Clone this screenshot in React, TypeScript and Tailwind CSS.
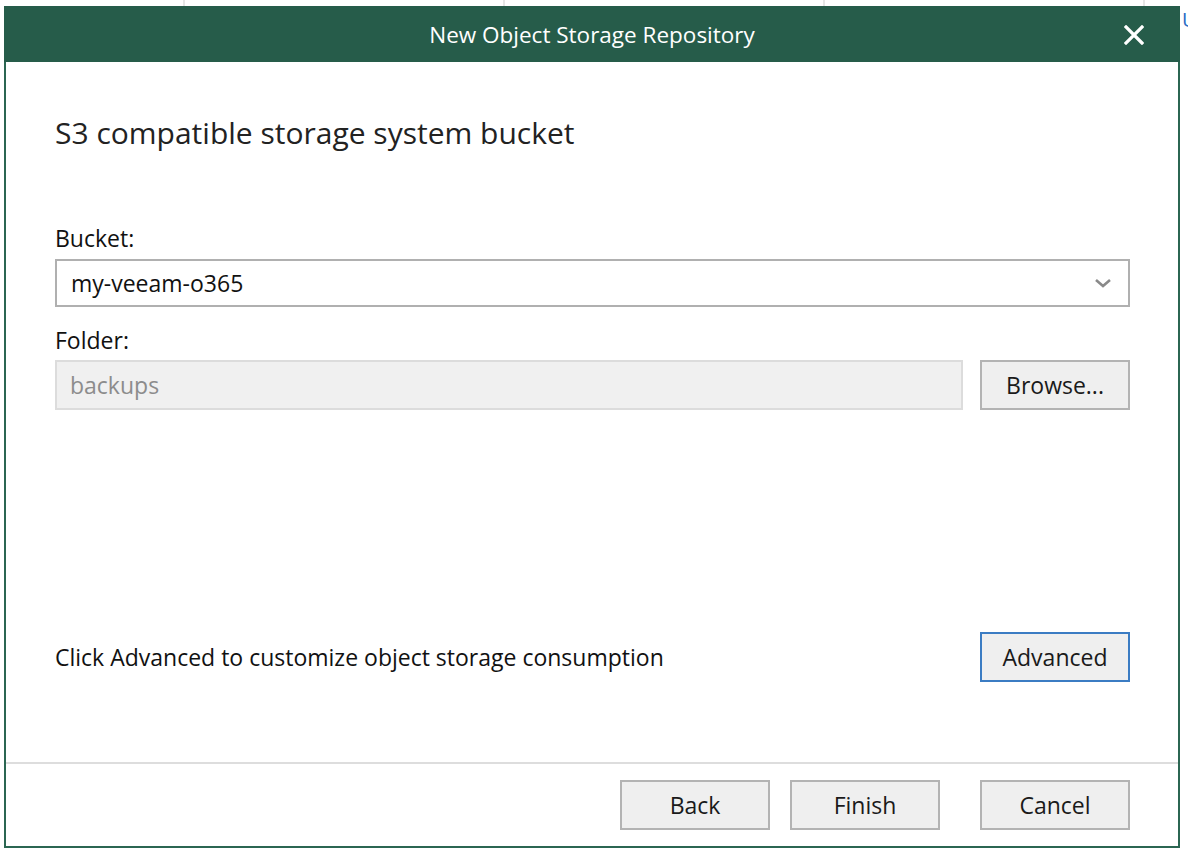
import React from "react";

const font = { fontFamily: '"Open Sans", "Noto Sans", sans-serif' };

function Btn({ label, focused = false }: { label: string; focused?: boolean }) {
  return (
    <div
      className={`w-[150px] h-[50px] shrink-0 flex items-center justify-center bg-[#efefef] border-2 text-[23px] text-[#1a1a1a] ${
        focused ? "border-[#3b7cc3]" : "border-[#b3b3b3]"
      }`}
    >
      {label}
    </div>
  );
}

export default function App() {
  return (
    <div className="w-[1188px] h-[858px] bg-white overflow-hidden" style={font}>
      {/* background strip */}
      <div className="flex h-[6px]">
        <div className="w-[185px] shrink-0 border-r-2 border-[#e6e6e6]" />
        <div className="w-[320px] shrink-0 border-r-2 border-[#e6e6e6]" />
        <div className="w-[320px] shrink-0 border-r-2 border-[#e6e6e6]" />
        <div className="w-[320px] shrink-0 border-r-2 border-[#e6e6e6]" />
      </div>
      <div className="flex">
        <div className="w-[4px] shrink-0" />
        <div className="w-[1176px] h-[842px] shrink-0 border-2 border-[#2b6652] flex flex-col bg-white">
          {/* title bar */}
          <div className="h-[56px] shrink-0 bg-[#265c4a] flex items-center justify-center relative -mt-[2px] -mx-[2px] pt-[2px]">
            <span className="text-white text-[22.5px]">New Object Storage Repository</span>
            <svg
              className="absolute right-[36px] top-[19px]"
              width="20"
              height="20"
              viewBox="0 0 20 20"
            >
              <path d="M2 2 L18 18 M18 2 L2 18" stroke="white" strokeWidth="3.2" strokeLinecap="square" />
            </svg>
          </div>
          {/* body */}
          <div className="flex flex-col pl-[49px] pr-[48px]">
            <div className="mt-[51px] h-[40px] leading-[40px] text-[30px] text-[#222]">
              S3 compatible storage system bucket
            </div>
            <div className="mt-[71px] h-[28px] leading-[28px] text-[23px] text-[#111]">Bucket:</div>
            <div className="mt-[7px] h-[48px] border-2 border-[#b0b0b0] flex items-center pl-[14px] pr-[16px] text-[23px] text-[#111]">
              <span className="flex-1">my-veeam-o365</span>
              <svg width="18" height="12" viewBox="0 0 18 12">
                <path d="M2 3 L9 9 L16 3" stroke="#8a8a8a" strokeWidth="2.6" fill="none" />
              </svg>
            </div>
            <div className="mt-[19px] h-[28px] leading-[28px] text-[23px] text-[#111]">Folder:</div>
            <div className="mt-[6px] flex items-center gap-[17px]">
              <div className="flex-1 h-[50px] bg-[#f0f0f0] border-2 border-[#dcdcdc] flex items-center pl-[13px] text-[23px] text-[#8c8c8c]">
                backups
              </div>
              <Btn label="Browse..." />
            </div>
            <div className="mt-[222px] flex items-center justify-between">
              <span className="text-[23px] text-[#111]">
                Click Advanced to customize object storage consumption
              </span>
              <Btn label="Advanced" focused />
            </div>
          </div>
          <div className="mt-[80px] h-[2px] shrink-0 bg-[#dddddd]" />
          <div className="flex-1 flex items-center justify-end pr-[48px]">
            <Btn label="Back" />
            <div className="w-[20px] shrink-0" />
            <Btn label="Finish" />
            <div className="w-[40px] shrink-0" />
            <Btn label="Cancel" />
          </div>
        </div>
        <div className="pt-[2px] pl-[2px] text-[20px] leading-[24px] text-[#2b6cc4]">U</div>
      </div>
    </div>
  );
}
